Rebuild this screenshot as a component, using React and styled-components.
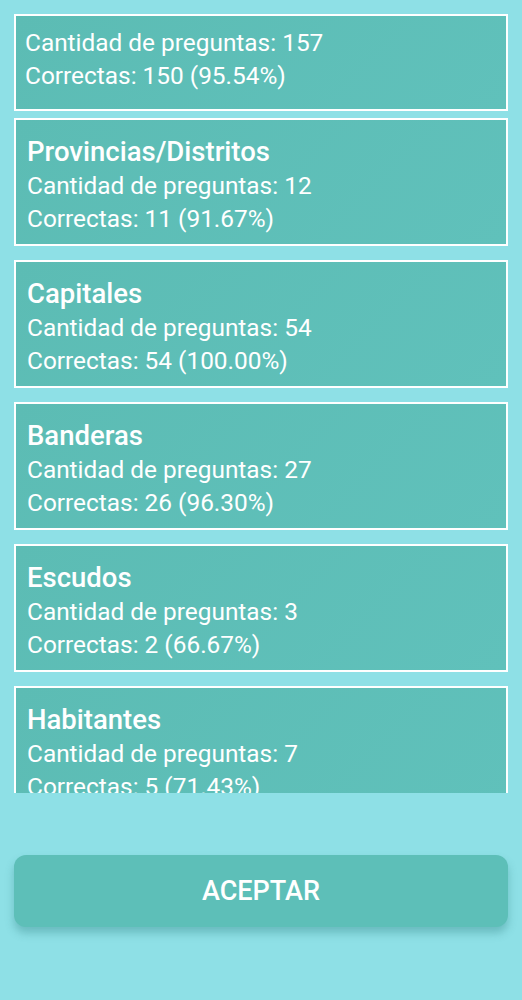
import React from 'react';
import styled, { createGlobalStyle } from 'styled-components';

const GlobalStyle = createGlobalStyle`
  html, body {
    margin: 0;
    padding: 0;
    background: #8ee0e6;
    font-family: Roboto, "Noto Sans", "Liberation Sans", sans-serif;
  }
`;

const Page = styled.div`
  display: flex;
  flex-direction: column;
  height: 1000px;
  background: #8ee0e6;
  overflow: hidden;
`;

const List = styled.div`
  display: flex;
  flex-direction: column;
  height: 793px;
  padding: 14px 14px 0;
  box-sizing: border-box;
  overflow: hidden;
  flex-shrink: 0;
`;

const Card = styled.div`
  flex-shrink: 0;
  border: 2px solid #ffffff;
  background: linear-gradient(135deg, #5cbcb4 0%, #60c1bb 100%);
  padding: ${(props) => (props.$compact ? '10px 11px 17px' : '14px 11px 9px')};
  margin-bottom: ${(props) => (props.$compact ? '7px' : '14px')};
  color: #ffffff;
`;

const Title = styled.div`
  font-size: 27.5px;
  font-weight: 500;
  line-height: 35px;
`;

const Line = styled.div`
  font-size: 24.4px;
  line-height: 33px;
  margin-left: ${(props) => (props.$shift ? '-2px' : '0')};
`;

const Footer = styled.div`
  display: flex;
  padding: 62px 14px 0;
`;

const Button = styled.button`
  flex: 1;
  height: 72px;
  border: none;
  border-radius: 12px;
  background: #5dbfb8;
  color: #ffffff;
  font-family: Roboto, "Noto Sans", sans-serif;
  font-size: 27px;
  font-weight: 500;
  box-shadow: 0 6px 8px rgba(40, 120, 120, 0.35);
  cursor: pointer;
`;

const stats = [
  { title: null, total: 157, ok: 150 },
  { title: 'Provincias/Distritos', total: 12, ok: 11 },
  { title: 'Capitales', total: 54, ok: 54 },
  { title: 'Banderas', total: 27, ok: 26 },
  { title: 'Escudos', total: 3, ok: 2 },
  { title: 'Habitantes', total: 7, ok: 5 }
];

export default function App() {
  return (
    <>
      <GlobalStyle />
      <Page>
        <List>
          {stats.map((s, i) => (
            <Card key={i} $compact={!s.title}>
              {s.title && <Title>{s.title}</Title>}
              <Line $shift={!s.title}>Cantidad de preguntas: {s.total}</Line>
              <Line $shift={!s.title}>
                Correctas: {s.ok} ({((s.ok / s.total) * 100).toFixed(2)}%)
              </Line>
            </Card>
          ))}
        </List>
        <Footer>
          <Button>ACEPTAR</Button>
        </Footer>
      </Page>
    </>
  );
}
